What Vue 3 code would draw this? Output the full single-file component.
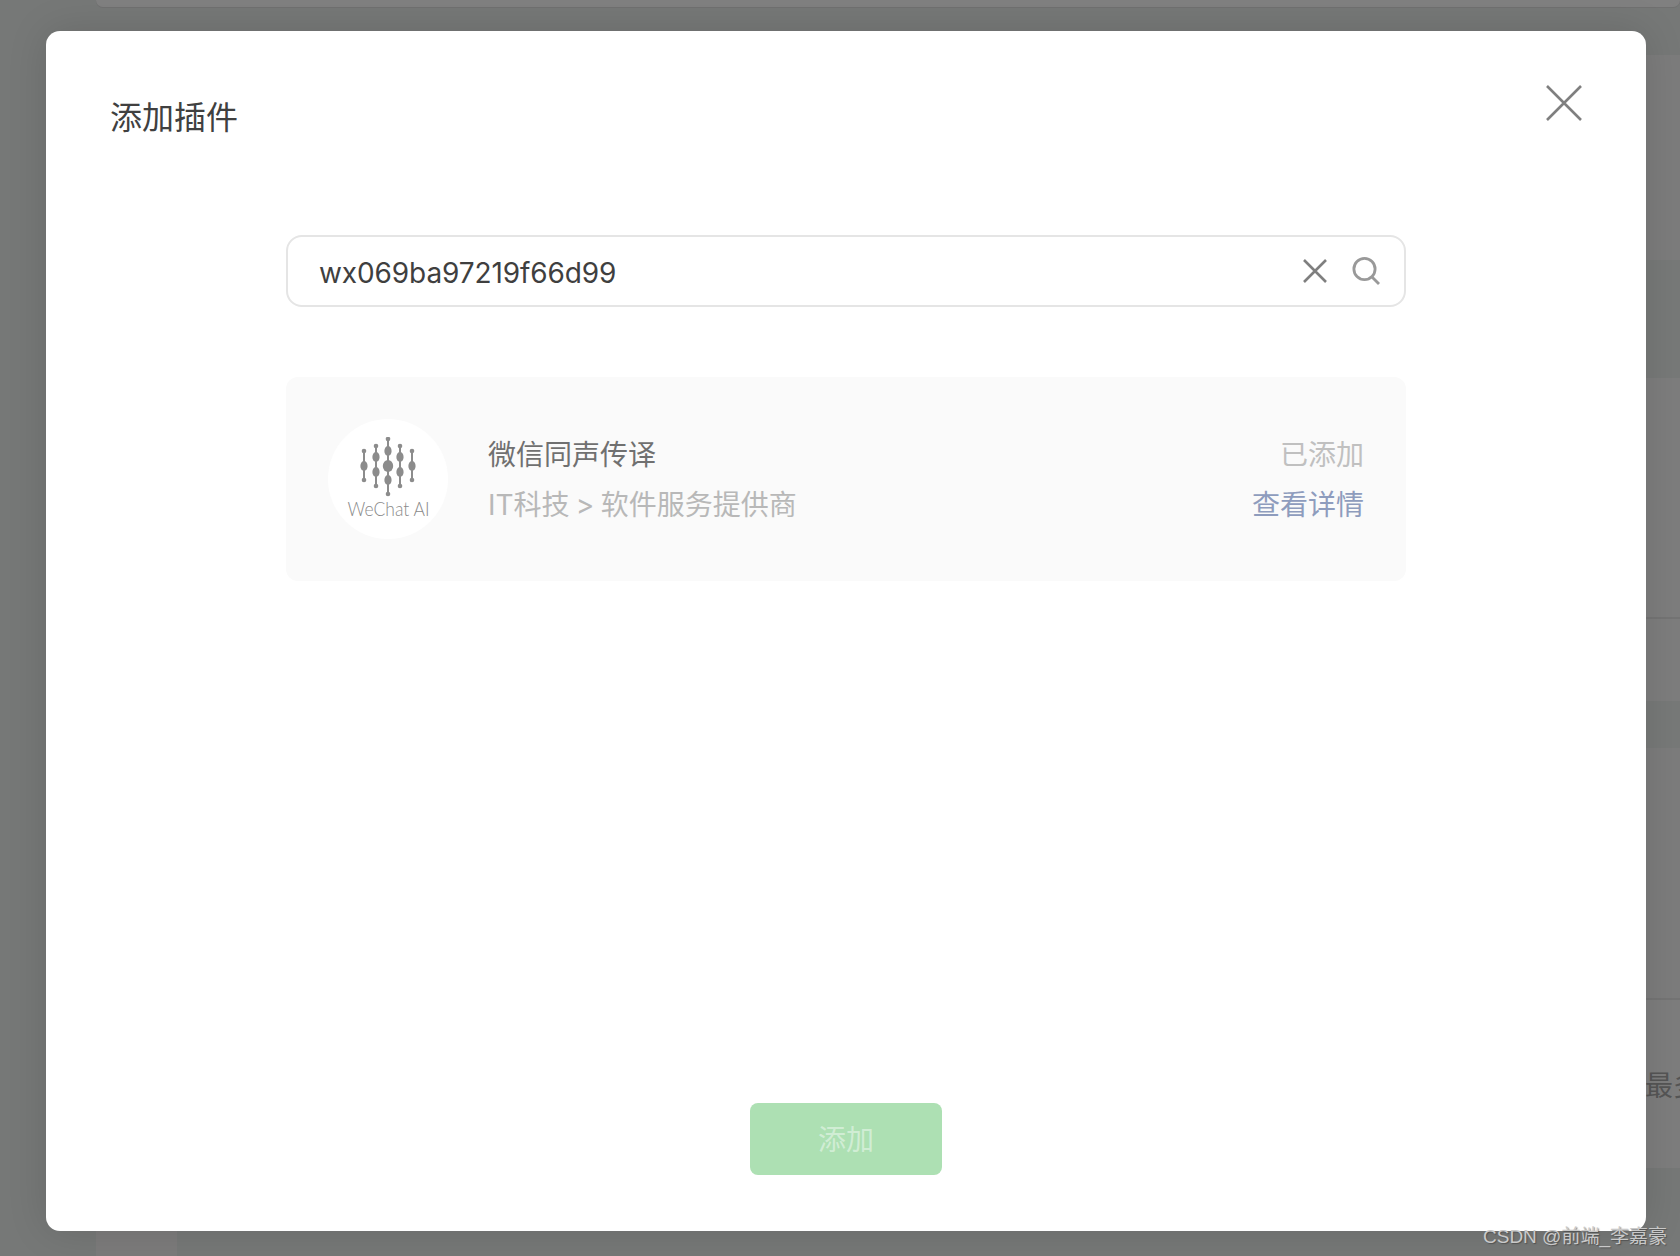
<script setup>
const bars = [
  { x: 6, y1: 14, y2: 43, dots: [[29, 3.6, 5]] },
  { x: 18, y1: 9, y2: 49, dots: [[20, 3.6, 5], [35, 3.6, 5]] },
  { x: 30, y1: 2, y2: 57, dots: [[14, 3.6, 5], [29, 5.2, 6], [43, 3.6, 5]] },
  { x: 42, y1: 9, y2: 49, dots: [[20, 3.6, 5], [35, 3.6, 5]] },
  { x: 54, y1: 14, y2: 43, dots: [[29, 3.6, 5]] }
]
</script>

<template>
  <div class="page">
    <div class="back">
      <div class="back-top"></div>
      <div class="back-main">
        <div class="band band-a"></div>
        <div class="band band-b"></div>
        <div class="band band-c"></div>
        <div class="band band-d"></div>
        <div class="band band-e"></div>
        <div class="band band-g"></div>
        <div class="band band-f"><span class="back-text">最多</span></div>
      </div>
      <div class="back-tab"></div>
    </div>

    <div class="overlay">
      <div class="modal">
        <header class="modal-head">
          <h2 class="modal-title">添加插件</h2>
          <button class="close" type="button" aria-label="关闭">
            <svg width="36" height="36" viewBox="0 0 36 36" fill="none" stroke="#7f7f7f" stroke-width="2.6">
              <path d="M1 1 35 35M35 1 1 35" />
            </svg>
          </button>
        </header>

        <div class="body">
          <div class="search">
            <span class="search-value">wx069ba97219f66d99</span>
            <svg class="clear-icon" width="24" height="24" viewBox="0 0 24 24" fill="none" stroke="#7f7f7f" stroke-width="2.6">
              <path d="M1 1 23 23M23 1 1 23" />
            </svg>
            <svg class="search-icon" width="28" height="28" viewBox="0 0 28 28" fill="none" stroke="#999" stroke-width="2.8">
              <circle cx="12.5" cy="12" r="10.6" />
              <path d="M20 20 27 27" />
            </svg>
          </div>

          <div class="card">
            <div class="logo">
              <svg width="60" height="60" viewBox="0 0 60 60" fill="#8c8c8c" stroke="none">
                <g v-for="b in bars" :key="b.x">
                  <rect :x="b.x - 1" :y="b.y1" width="2" :height="b.y2 - b.y1" />
                  <circle :cx="b.x" :cy="b.y1" r="2.3" />
                  <circle :cx="b.x" :cy="b.y2" r="2.3" />
                  <ellipse v-for="d in b.dots" :key="d[0]" :cx="b.x" :cy="d[0]" :rx="d[1]" :ry="d[2]" />
                </g>
              </svg>
              <span class="logo-text">WeChat AI</span>
            </div>
            <div class="info">
              <div class="info-name">微信同声传译</div>
              <div class="info-cat">IT科技 &gt; 软件服务提供商</div>
            </div>
            <div class="actions">
              <div class="added">已添加</div>
              <a class="detail">查看详情</a>
            </div>
          </div>
        </div>

        <footer class="foot">
          <button class="add" type="button">添加</button>
        </footer>
      </div>
    </div>

    <div class="mark">CSDN @前端_李嘉豪</div>
  </div>
</template>

<style>
html, body { margin: 0; padding: 0; }
</style>

<style scoped>
.page {
  position: relative;
  width: 1680px;
  height: 1256px;
  overflow: hidden;
  background: #767877;
  font-family: Inter, "Noto Sans CJK SC", sans-serif;
}
.back {
  height: 100%;
  display: flex;
  flex-direction: column;
  padding-left: 96px;
  box-sizing: border-box;
}
.back-top {
  height: 7px;
  background: #808080;
  border-radius: 0 0 8px 8px;
  box-shadow: 0 1px 0 #707070;
}
.back-main {
  margin-top: 48px;
  display: flex;
  flex-direction: column;
}
.band { box-sizing: border-box; }
.band-a { height: 205px; background: #7c7c7c; }
.band-b { height: 118px; background: #777978; }
.band-c { height: 241px; background: #7d7d7d; border-bottom: 2px solid #747474; }
.band-d { height: 82px; background: #7d7d7d; }
.band-e { height: 47px; background: #777978; }
.band-g { height: 252px; background: #7c7c7c; border-bottom: 2px solid #747474; }
.band-f {
  height: 168px;
  background: #7d7d7d;
  display: flex;
  justify-content: flex-end;
  padding-top: 68px;
}
.back-text {
  width: 35px;
  overflow: hidden;
  white-space: nowrap;
  font-size: 28px;
  line-height: 36px;
  height: 36px;
  color: #555;
}
.back-tab {
  position: absolute;
  left: 96px;
  top: 1231px;
  width: 81px;
  height: 25px;
  background: #7c7b7b;
}
.overlay {
  position: absolute;
  inset: 0;
  padding: 31px 34px 25px 46px;
  box-sizing: border-box;
}
.modal {
  width: 1600px;
  height: 1200px;
  box-sizing: border-box;
  background: #fff;
  border-radius: 14px;
  box-shadow: 0 0 40px rgba(0, 0, 0, 0.12);
  display: flex;
  flex-direction: column;
}
.modal-head {
  display: flex;
  justify-content: space-between;
  align-items: flex-start;
  padding: 54px 64px 0;
  height: 204px;
  box-sizing: border-box;
}
.modal-title {
  margin: 11px 0 0;
  font-size: 32px;
  line-height: 44px;
  font-weight: 400;
  color: #404040;
}
.close {
  padding: 0;
  border: 0;
  background: none;
  display: block;
  width: 36px;
  height: 36px;
}
.close svg { display: block; }
.body {
  flex: 1;
  padding: 0 240px;
  display: flex;
  flex-direction: column;
  gap: 70px;
}
.search {
  height: 72px;
  box-sizing: border-box;
  border: 2px solid #e5e5e5;
  border-radius: 16px;
  padding: 0 24px 0 31px;
  display: flex;
  align-items: center;
}
.search-value {
  flex: 1;
  font-size: 28px;
  line-height: 36px;
  padding-top: 3px;
  letter-spacing: -0.1px;
  color: #3f3f3f;
}
.clear-icon { margin-right: 1px; }
.search-icon { margin-left: 24px; }
.card {
  height: 204px;
  box-sizing: border-box;
  background: #fafafa;
  border-radius: 12px;
  padding: 0 42px;
  display: flex;
  align-items: center;
}
.logo {
  width: 120px;
  height: 120px;
  border-radius: 50%;
  background: #fff;
  display: flex;
  flex-direction: column;
  align-items: center;
  padding-top: 18px;
  box-sizing: border-box;
  flex-shrink: 0;
}
.logo svg { display: block; }
.logo-text {
  font-family: Lato, sans-serif;
  font-weight: 300;
  font-size: 19px;
  line-height: 24px;
  color: #8a8a8a;
  white-space: nowrap;
  transform: scaleX(0.92);
}
.info {
  flex: 1;
  margin-left: 40px;
  font-size: 28px;
  line-height: 50px;
  padding-top: 2px;
}
.info-name { color: #707070; }
.info-cat { color: #b8b8b8; word-spacing: -1.6px; }
.actions {
  text-align: right;
  font-size: 28px;
  line-height: 50px;
  padding-top: 2px;
}
.added { color: #c0c0c0; }
.detail { color: #8e9cbd; }
.foot {
  display: flex;
  justify-content: center;
  padding-bottom: 56px;
}
.add {
  width: 192px;
  height: 72px;
  border: 0;
  border-radius: 8px;
  padding: 0 0 2px;
  background: #ade0b3;
  color: rgba(255, 255, 255, 0.45);
  font: inherit;
  font-size: 28px;
}
.mark {
  position: absolute;
  left: 1483px;
  top: 1224px;
  font-family: "Liberation Sans", "Noto Sans CJK SC", sans-serif;
  font-size: 19px;
  line-height: 26px;
  color: #c9c9c9;
  text-shadow: 1px 1px 1px rgba(60, 60, 60, 0.6);
  white-space: nowrap;
}
</style>
